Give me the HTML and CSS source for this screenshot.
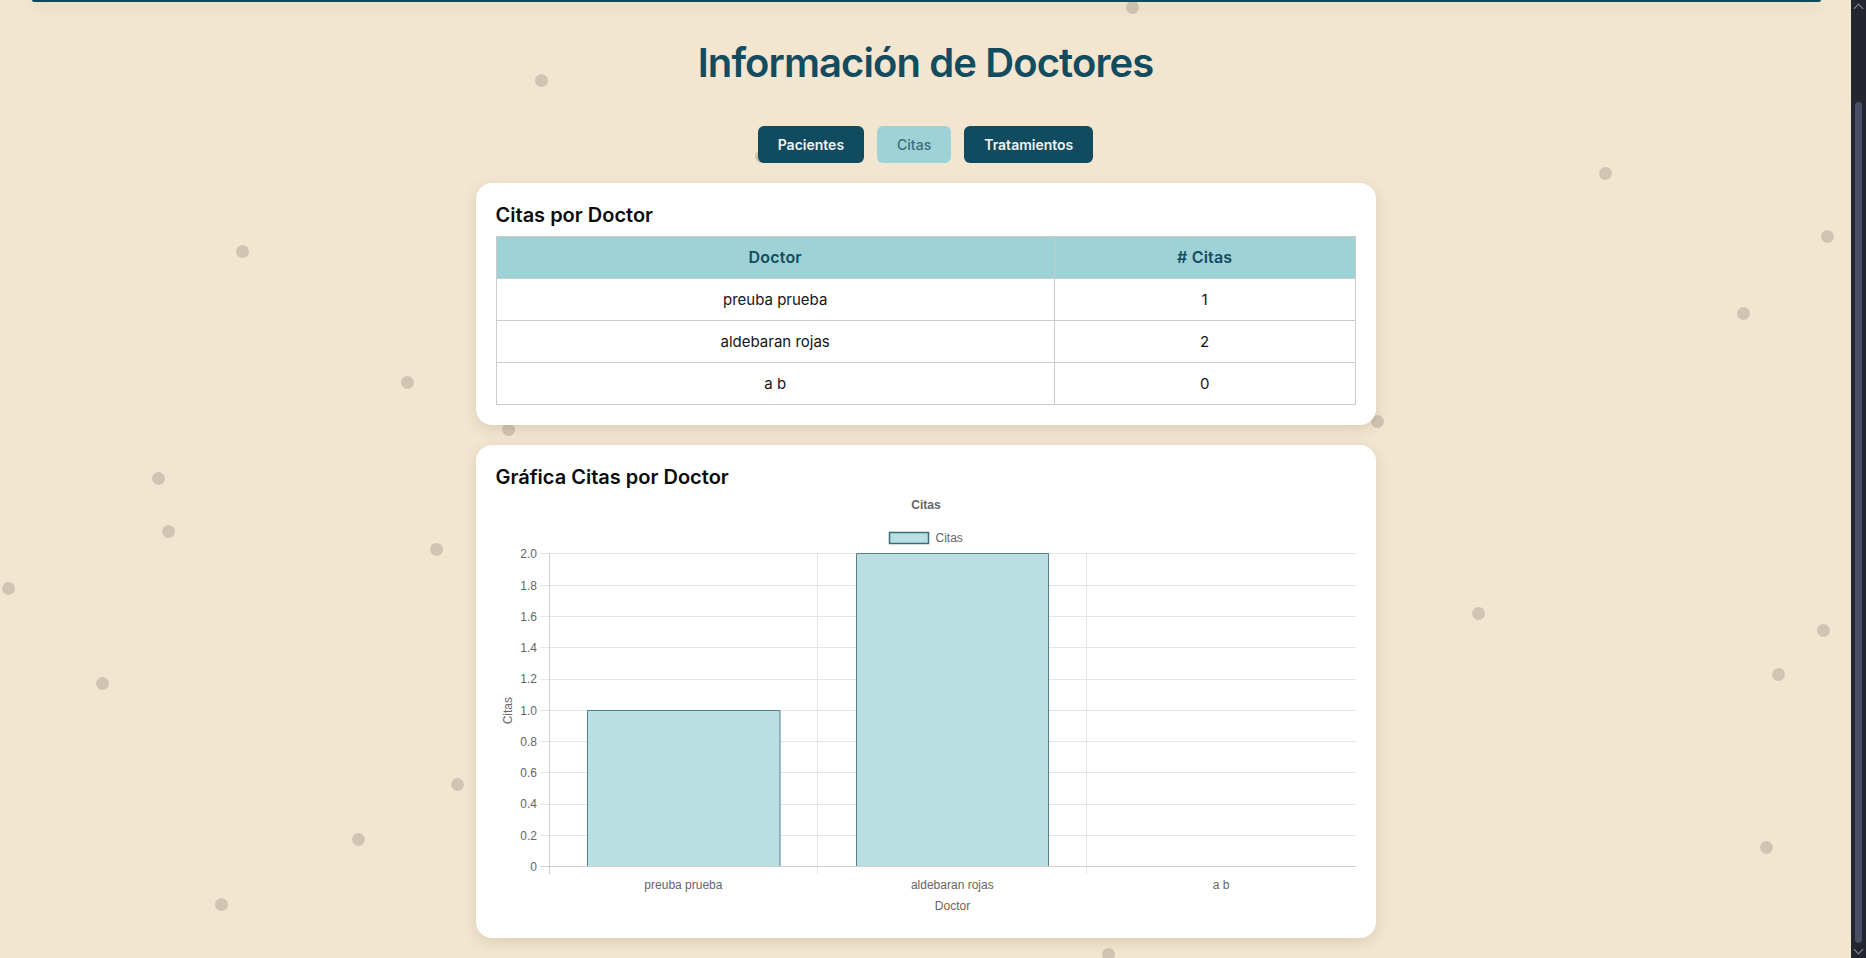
FILE: index.html
```html
<!DOCTYPE html>
<html lang="es">
<head>
<meta charset="utf-8">
<title>Información de Doctores</title>
<link rel="stylesheet" href="styles.css">
</head>
<body>
<div class="dots" aria-hidden="true">
  <span class="dot" style="--x:1132px;--y:7px"></span>
  <span class="dot" style="--x:541px;--y:80px"></span>
  <span class="dot" style="--x:242px;--y:251px"></span>
  <span class="dot" style="--x:1605px;--y:173px"></span>
  <span class="dot" style="--x:1827px;--y:236px"></span>
  <span class="dot" style="--x:1743px;--y:313px"></span>
  <span class="dot" style="--x:407px;--y:382px"></span>
  <span class="dot" style="--x:508px;--y:429px"></span>
  <span class="dot" style="--x:1377px;--y:421px"></span>
  <span class="dot" style="--x:158px;--y:478px"></span>
  <span class="dot" style="--x:168px;--y:531px"></span>
  <span class="dot" style="--x:436px;--y:549px"></span>
  <span class="dot" style="--x:8px;--y:588px"></span>
  <span class="dot" style="--x:1478px;--y:613px"></span>
  <span class="dot" style="--x:1823px;--y:630px"></span>
  <span class="dot" style="--x:1778px;--y:674px"></span>
  <span class="dot" style="--x:102px;--y:683px"></span>
  <span class="dot" style="--x:457px;--y:784px"></span>
  <span class="dot" style="--x:358px;--y:839px"></span>
  <span class="dot" style="--x:1766px;--y:847px"></span>
  <span class="dot" style="--x:221px;--y:904px"></span>
  <span class="dot" style="--x:1108px;--y:954px"></span>
  <span class="dot" style="--x:761px;--y:156px"></span>
</div>

<div class="page">
  <header class="topbar"></header>
  <h1 class="title">Información de Doctores</h1>
  <nav class="tabs">
    <button class="tab">Pacientes</button>
    <button class="tab tab-active">Citas</button>
    <button class="tab">Tratamientos</button>
  </nav>

  <section class="card">
    <h3 class="card-title">Citas por Doctor</h3>
    <table class="data">
      <thead>
        <tr><th class="col-doctor">Doctor</th><th># Citas</th></tr>
      </thead>
      <tbody>
        <tr><td>preuba prueba</td><td>1</td></tr>
        <tr><td>aldebaran rojas</td><td>2</td></tr>
        <tr><td>a b</td><td>0</td></tr>
      </tbody>
    </table>
  </section>

  <section class="card">
    <h3 class="card-title">Gráfica Citas por Doctor</h3>
    <svg class="chart" width="860" height="420" viewBox="0 0 860 420">
      <text class="c-title" x="430" y="10.6" text-anchor="middle">Citas</text>
      <rect x="393.5" y="34.5" width="39" height="11" fill="#badfe2" stroke="#3d6c79" stroke-width="1.5"/>
      <text class="c-lbl" x="439.5" y="44.3">Citas</text>

      <g class="grid">
        <line x1="44" y1="55.5" x2="860" y2="55.5"/>
        <line x1="44" y1="87.5" x2="860" y2="87.5"/>
        <line x1="44" y1="118.5" x2="860" y2="118.5"/>
        <line x1="44" y1="149.5" x2="860" y2="149.5"/>
        <line x1="44" y1="181.5" x2="860" y2="181.5"/>
        <line x1="44" y1="212.5" x2="860" y2="212.5"/>
        <line x1="44" y1="243.5" x2="860" y2="243.5"/>
        <line x1="44" y1="274.5" x2="860" y2="274.5"/>
        <line x1="44" y1="306.5" x2="860" y2="306.5"/>
        <line x1="44" y1="337.5" x2="860" y2="337.5"/>
        <line x1="321.5" y1="55.5" x2="321.5" y2="376.5"/>
        <line x1="590.5" y1="55.5" x2="590.5" y2="376.5"/>
      </g>

      <rect x="91.5" y="212.5" width="192.5" height="156" fill="#badfe2"/>
      <path d="M91.5 368.5 V212.5 H284 V368.5" fill="none" stroke="#55818c" stroke-width="1"/>
      <rect x="360.5" y="55.5" width="192" height="313" fill="#badfe2"/>
      <path d="M360.5 368.5 V55.5 H552.5 V368.5" fill="none" stroke="#55818c" stroke-width="1"/>

      <g class="axis">
        <line x1="53.5" y1="55.5" x2="53.5" y2="376.5"/>
        <line x1="44" y1="368.5" x2="860" y2="368.5"/>
      </g>

      <g class="c-lbl" text-anchor="end">
        <text x="41" y="59.8">2.0</text>
        <text x="41" y="91.5">1.8</text>
        <text x="41" y="122.8">1.6</text>
        <text x="41" y="154">1.4</text>
        <text x="41" y="185.3">1.2</text>
        <text x="41" y="216.6">1.0</text>
        <text x="41" y="247.9">0.8</text>
        <text x="41" y="279.2">0.6</text>
        <text x="41" y="310.4">0.4</text>
        <text x="41" y="341.7">0.2</text>
        <text x="41" y="373">0</text>
      </g>

      <g class="c-lbl" text-anchor="middle">
        <text x="187.4" y="390.5">preuba prueba</text>
        <text x="456.3" y="390.5">aldebaran rojas</text>
        <text x="725.2" y="390.5">a b</text>
        <text x="456.5" y="412">Doctor</text>
        <text x="16" y="212.7" transform="rotate(-90 16 212.7)">Citas</text>
      </g>
    </svg>
  </section>
</div>

<div class="scrollbar" aria-hidden="true">
  <span class="sb-arrow sb-up"></span>
  <span class="sb-thumb"></span>
  <span class="sb-arrow sb-down"></span>
</div>
</body>
</html>
```
FILE: styles.css
```css
* { box-sizing: border-box; }

html, body {
  margin: 0;
  padding: 0;
  height: 100%;
}

body {
  background: #f2e6d0;
  font-family: Inter, "Noto Sans", "Liberation Sans", sans-serif;
  color: #111;
  overflow: hidden;
  position: relative;
}

.dots {
  position: absolute;
  inset: 0;
  pointer-events: none;
}

.dot {
  position: absolute;
  left: calc(var(--x) - 6.5px);
  top: calc(var(--y) - 6.5px);
  width: 13px;
  height: 13px;
  border-radius: 50%;
  background: #d0c5b2;
}

.page {
  position: relative;
  width: calc(100% - 15px);
  display: flex;
  flex-direction: column;
  align-items: center;
}

.topbar {
  align-self: stretch;
  margin: 0 30px 0 32px;
  height: 2px;
  background: #0f4b5d;
  border-radius: 0 0 10px 10px;
  box-shadow: 0 4px 14px rgba(60, 40, 10, 0.22);
}

.title {
  margin: 37px 0 39px;
  font-size: 40px;
  line-height: 48px;
  font-weight: 600;
  color: #134b5f;
  letter-spacing: -0.9px;
}

.tabs {
  display: flex;
  gap: 13px;
  margin-bottom: 20px;
}

.tab {
  font-family: inherit;
  font-size: 14px;
  line-height: 17px;
  font-weight: 600;
  padding: 10px 20px;
  border: none;
  border-radius: 6px;
  background: #114b5f;
  color: #f2f2f2;
}

.tab-active {
  background: #9dd2d6;
  color: #3a6d79;
  font-weight: 500;
}

.card {
  width: 900px;
  background: #fff;
  border-radius: 16px;
  padding: 20px;
  margin-bottom: 20px;
  box-shadow: 0 4px 14px rgba(90, 60, 20, 0.14);
}

.card-title {
  margin: 0 0 9px;
  font-size: 20px;
  line-height: 24px;
  font-weight: 600;
  color: #0b0b0b;
  letter-spacing: 0;
}

.data {
  width: 100%;
  border-collapse: collapse;
  font-size: 15px;
}

.data th,
.data td {
  border: 1px solid #cccccc;
  padding: 11px 8px;
  line-height: 19px;
  text-align: center;
}

.data th {
  background: #9dd2d6;
  color: #134b5f;
  font-weight: 600;
  font-size: 16px;
  letter-spacing: 0.2px;
}

.data td {
  color: #151515;
  font-weight: 400;
}

.col-doctor { width: 65%; }

.chart {
  display: block;
  font-family: "Liberation Sans", Arial, sans-serif;
}

.c-title {
  font-size: 12px;
  font-weight: 700;
  fill: #666;
}

.c-lbl {
  font-size: 12px;
  fill: #666;
}

.grid line {
  stroke: #e5e5e5;
  stroke-width: 1;
}

.axis line {
  stroke: #cfcfcf;
  stroke-width: 1;
}

.scrollbar {
  position: fixed;
  top: 0;
  right: 0;
  width: 15px;
  height: 100%;
  background: #24262f;
}

.sb-thumb {
  position: absolute;
  left: 4px;
  top: 102px;
  width: 7px;
  height: 841px;
  border-radius: 4px;
  background: #4a4d66;
}

.sb-arrow {
  position: absolute;
  left: 4px;
  width: 7px;
  height: 7px;
  border-left: 1.5px solid #8a8c98;
  border-top: 1.5px solid #8a8c98;
}

.sb-up {
  top: 5px;
  transform: rotate(45deg);
}

.sb-down {
  bottom: 5px;
  transform: rotate(225deg);
}
```
